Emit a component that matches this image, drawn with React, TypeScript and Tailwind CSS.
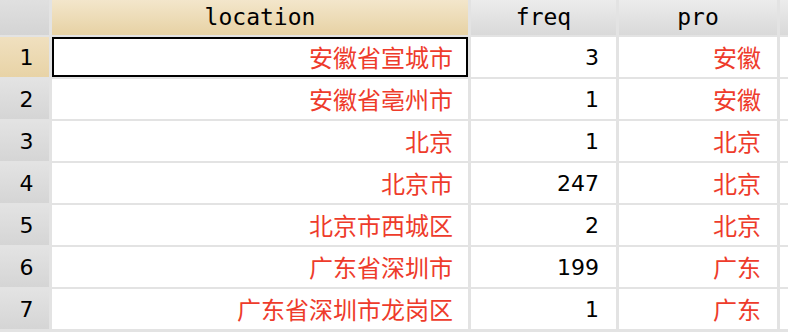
import React from 'react';

const ROWS = [
  { location: '安徽省宣城市', freq: 3, pro: '安徽' },
  { location: '安徽省亳州市', freq: 1, pro: '安徽' },
  { location: '北京', freq: 1, pro: '北京' },
  { location: '北京市', freq: 247, pro: '北京' },
  { location: '北京市西城区', freq: 2, pro: '北京' },
  { location: '广东省深圳市', freq: 199, pro: '广东' },
  { location: '广东省深圳市龙岗区', freq: 1, pro: '广东' },
];

const headCell =
  "flex items-center justify-center bg-gradient-to-b from-[#ececec] to-[#d9d9d9] text-[23px] text-black font-['DejaVu_Sans_Mono','Liberation_Mono',monospace]";

export default function App() {
  return (
    <div className="w-[788px] h-[332px] overflow-hidden bg-[#e3e3e3]">
      <div className="grid grid-cols-[49px_416px_145px_158px_1fr] grid-rows-[35px] auto-rows-[40px] gap-x-[3px] gap-y-[2px]">
        {/* header */}
        <div className="bg-gradient-to-b from-[#e0e0e0] to-[#d4d4d4]" />
        <div className="flex items-center justify-center bg-gradient-to-b from-[#f3e6cb] to-[#e7d2a4] text-[23px] text-black font-['DejaVu_Sans_Mono','Liberation_Mono',monospace]">
          location
        </div>
        <div className={headCell}>freq</div>
        <div className={headCell}>pro</div>
        <div className="bg-gradient-to-b from-[#ececec] to-[#d9d9d9]" />

        {ROWS.map((row, i) => {
          const selected = i === 0;
          return (
            <React.Fragment key={i}>
              <div
                className={
                  selected
                    ? "flex items-center justify-center pl-1 bg-gradient-to-b from-[#f0e0bf] to-[#e8d3a6] text-[22px] text-black font-['DejaVu_Sans','Liberation_Sans',sans-serif]"
                    : "flex items-center justify-center pl-1 bg-gradient-to-b from-[#e3e3e3] to-[#d5d5d5] text-[22px] text-black font-['DejaVu_Sans','Liberation_Sans',sans-serif]"
                }
              >
                {i + 1}
              </div>
              <div
                className={
                  selected
                    ? "flex items-center justify-end bg-white pr-[13px] border-2 border-black text-[24px] text-[#ee3b2b] font-['Noto_Sans_CJK_SC','Noto_Sans',sans-serif]"
                    : "flex items-center justify-end bg-white pr-[15px] text-[24px] text-[#ee3b2b] font-['Noto_Sans_CJK_SC','Noto_Sans',sans-serif]"
                }
              >
                {row.location}
              </div>
              <div className="flex items-center justify-end bg-white pr-[17px] text-[22px] text-black font-['DejaVu_Sans','Liberation_Sans',sans-serif]">
                {row.freq}
              </div>
              <div className="flex items-center justify-end bg-white pr-[16px] text-[24px] text-[#ee3b2b] font-['Noto_Sans_CJK_SC','Noto_Sans',sans-serif]">
                {row.pro}
              </div>
              <div className="bg-white" />
            </React.Fragment>
          );
        })}
      </div>
    </div>
  );
}
